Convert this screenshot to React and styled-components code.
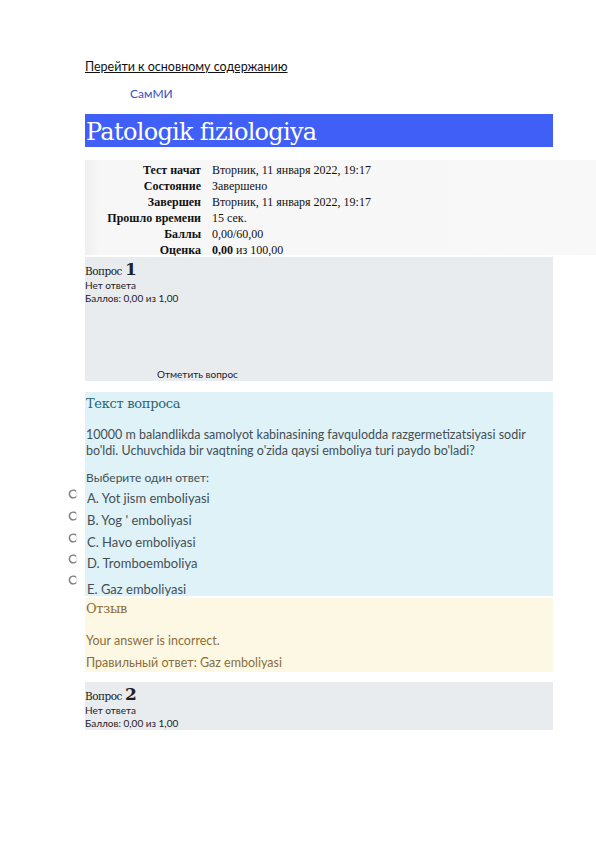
import React from "react";
import styled, { createGlobalStyle } from "styled-components";

const Global = createGlobalStyle`
  html, body { margin: 0; padding: 0; background: #fff; }
  body { font-family: Lato, "Noto Sans", sans-serif; color: #1d2125; }
`;

const Page = styled.div`
  width: 596px;
  min-height: 842px;
  padding: 59px 0 0 85px;
  box-sizing: border-box;
`;

const SkipLink = styled.a`
  display: block;
  font-family: Lato, sans-serif;
  font-size: 12.5px;
  line-height: 16px;
  color: #111;
  text-decoration: underline;
`;

const Brand = styled.div`
  margin: 11px 0 0 45px;
  font-family: Lato, sans-serif;
  font-size: 12px;
  line-height: 16px;
  color: #3b4fc4;
`;

const TitleBar = styled.h1`
  margin: 12px 0 0 0;
  width: 468px;
  height: 33px;
  background: #3f5ff6;
  color: #fff;
  font-family: "DejaVu Serif", serif;
  font-weight: normal;
  font-size: 24px;
  line-height: 36px;
  padding-left: 1px;
  box-sizing: border-box;
  white-space: nowrap;
  overflow: hidden;
  letter-spacing: -0.7px;
`;

const Summary = styled.div`
  margin-top: 13px;
  width: 511px;
  height: 95px;
  padding-top: 2px;
  box-sizing: border-box;
  background: linear-gradient(to right, #efefef 0, #f7f7f7 14px, #f8f8f8 100%);
  display: grid;
  grid-template-columns: 116px 1fr;
  grid-auto-rows: 16px;
  font-family: "Liberation Serif", serif;
  font-size: 12px;
  line-height: 16px;
  color: #111;
`;

const Label = styled.div`
  font-weight: bold;
  text-align: right;
`;

const Value = styled.div`
  padding-left: 11px;
`;

const InfoBox = styled.div`
  margin-top: ${(p) => p.$top}px;
  width: 468px;
  height: ${(p) => p.$h}px;
  background: #e9ecef;
  box-sizing: border-box;
  padding-top: 4px;
  display: flex;
  flex-direction: column;
`;

const QNo = styled.div`
  font-family: "DejaVu Serif", serif;
  font-size: 10.5px;
  line-height: 16px;
  color: #1d2125;
  letter-spacing: -0.5px;
  b {
    font-size: 17px;
    font-weight: bold;
    margin-left: 3px;
  }
`;

const SmallLine = styled.div`
  font-family: Lato, sans-serif;
  font-size: 10px;
  line-height: 13px;
  color: #1d2125;
`;

const Flag = styled.div`
  margin-top: auto;
  margin-left: 72px;
  font-family: Lato, sans-serif;
  font-size: 10px;
  line-height: 13px;
  color: #1d2125;
`;

const Formulation = styled.div`
  margin-top: 11px;
  width: 468px;
  height: 204px;
  background: #def2f8;
  box-sizing: border-box;
  padding: 3px 0 0 1px;
  color: #2f4a52;
`;

const SectionHead = styled.div`
  font-family: "DejaVu Serif", serif;
  font-size: 13px;
  line-height: 18px;
  color: ${(p) => p.$color};
  letter-spacing: -0.3px;
`;

const QText = styled.div`
  margin-top: 14px;
  font-family: Lato, sans-serif;
  font-size: 12.5px;
  line-height: 16px;
  color: #444f54;
`;

const Prompt = styled.div`
  margin-top: 11px;
  font-family: Lato, sans-serif;
  font-size: 12px;
  line-height: 16px;
  color: #444f54;
`;

const Options = styled.div`
  margin-top: 4px;
  display: flex;
  flex-direction: column;
`;

const Option = styled.div`
  display: flex;
  align-items: flex-start;
  height: ${(p) => p.$h}px;
  font-family: Lato, sans-serif;
  font-size: 13px;
  line-height: 16px;
  color: #444f54;
`;

const RadioWrap = styled.span`
  width: 10px;
  height: 10px;
  margin-left: -18px;
  margin-right: 9px;
  margin-top: ${(p) => p.$mt}px;
  flex: none;
  display: block;
`;

const OptText = styled.span`
  padding-top: ${(p) => p.$pt}px;
`;

const Feedback = styled.div`
  margin-top: 2px;
  width: 468px;
  height: 74px;
  background: #fdf8e3;
  box-sizing: border-box;
  padding: 2px 0 0 1px;
  color: #8a6d3b;
`;

const FbLine = styled.div`
  margin-top: ${(p) => p.$mt}px;
  font-family: Lato, sans-serif;
  font-size: 12.5px;
  line-height: 16px;
  color: #8a6d3b;
`;

const Radio = ({ mt }) => (
  <RadioWrap $mt={mt}>
    <svg width="10" height="10" viewBox="0 0 10 10">
      <circle cx="5" cy="5" r="3.9" fill="#fff" stroke="#e2e2e2" strokeWidth="1.1" />
      <path d="M8 2.2 A3.9 3.9 0 1 0 8.2 7.6" fill="none" stroke="#7e7e7e" strokeWidth="1.4" />
    </svg>
  </RadioWrap>
);

const rows = [
  ["Тест начат", "Вторник, 11 января 2022, 19:17"],
  ["Состояние", "Завершено"],
  ["Завершен", "Вторник, 11 января 2022, 19:17"],
  ["Прошло времени", "15 сек."],
  ["Баллы", "0,00/60,00"],
];

const options = [
  { t: "A. Yot jism emboliyasi", h: 22, mt: -4, pt: 0 },
  { t: "B. Yog ' emboliyasi", h: 22, mt: -4, pt: 0 },
  { t: "C. Havo emboliyasi", h: 21, mt: -4, pt: 0 },
  { t: "D. Tromboemboliya", h: 21, mt: -4, pt: 0 },
  { t: "E. Gaz emboliyasi", h: 22, mt: -4, pt: 5 },
];

export default function App() {
  return (
    <>
      <Global />
      <Page>
        <SkipLink href="#">Перейти к основному содержанию</SkipLink>
        <Brand>СамМИ</Brand>
        <TitleBar>Patologik fiziologiya</TitleBar>
        <Summary>
          {rows.map(([l, v]) => (
            <React.Fragment key={l}>
              <Label>{l}</Label>
              <Value>{v}</Value>
            </React.Fragment>
          ))}
          <Label>Оценка</Label>
          <Value>
            <b>0,00</b> из 100,00
          </Value>
        </Summary>

        <InfoBox $top={2} $h={124}>
          <QNo>
            Вопрос<b>1</b>
          </QNo>
          <SmallLine>Нет ответа</SmallLine>
          <SmallLine>Баллов: 0,00 из 1,00</SmallLine>
          <Flag>Отметить вопрос</Flag>
        </InfoBox>

        <Formulation>
          <SectionHead $color="#2f6473">Текст вопроса</SectionHead>
          <QText>
            10000 m balandlikda samolyot kabinasining favqulodda razgermetizatsiyasi sodir
            <br />
            bo'ldi. Uchuvchida bir vaqtning o'zida qaysi emboliya turi paydo bo'ladi?
          </QText>
          <Prompt>Выберите один ответ:</Prompt>
          <Options>
            {options.map((o) => (
              <Option key={o.t} $h={o.h}>
                <Radio mt={o.mt} />
                <OptText $pt={o.pt}>{o.t}</OptText>
              </Option>
            ))}
          </Options>
        </Formulation>

        <Feedback>
          <SectionHead $color="#8a6d3b">Отзыв</SectionHead>
          <FbLine $mt={15}>Your answer is incorrect.</FbLine>
          <FbLine $mt={6}>Правильный ответ: Gaz emboliyasi</FbLine>
        </Feedback>

        <InfoBox $top={10} $h={48}>
          <QNo>
            Вопрос<b>2</b>
          </QNo>
          <SmallLine>Нет ответа</SmallLine>
          <SmallLine>Баллов: 0,00 из 1,00</SmallLine>
        </InfoBox>
      </Page>
    </>
  );
}
